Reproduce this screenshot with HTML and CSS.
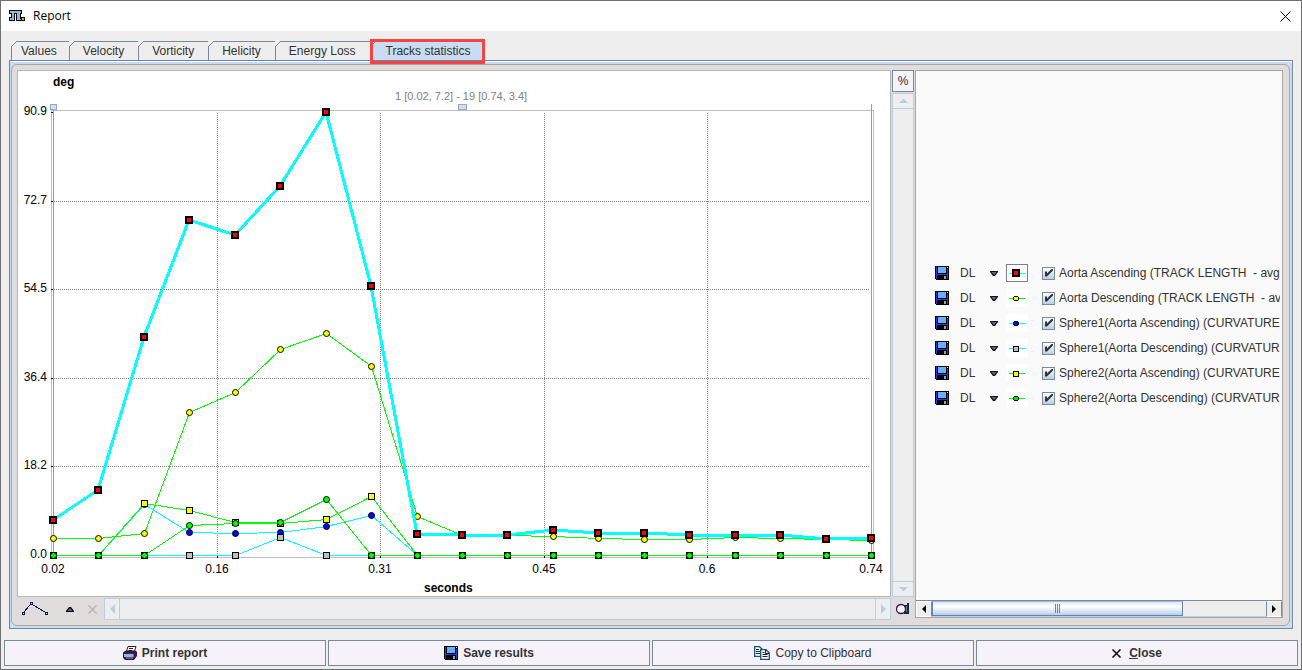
FILE: index.html
```html
<!DOCTYPE html>
<html lang="en">
<head>
<meta charset="utf-8">
<title>Report</title>
<link rel="stylesheet" href="styles.css">
</head>
<body>
<svg class="defs" aria-hidden="true">
  <defs>
    <symbol id="floppy" viewBox="0 0 14 14">
      <path d="M0 0H14V14H1L0 13Z" fill="#000"/>
      <path d="M1 1H2V13H1ZM12 3H13V13H12ZM2 8H12V9H2Z" fill="#2a35e0"/>
      <path d="M3 1H11V7H3Z" fill="#63b1ff"/>
      <path d="M12 1H13V2H12Z" fill="#fff"/>
      <path d="M9 10H11V13H9Z" fill="#a0a0a0"/>
    </symbol>
    <symbol id="down" viewBox="0 0 8 5"><path d="M0 0H8V1L5 5H3L0 1Z" fill="#111"/><path d="M1.500 1H6.500L4 4Z" fill="#66668c"/></symbol>
    <marker id="m-red" markerUnits="userSpaceOnUse" markerWidth="8" markerHeight="8" refX="4" refY="4"><rect width="8" height="8"/><rect x="2" y="2" width="4" height="4" fill="#f00"/></marker>
    <marker id="m-yc" markerUnits="userSpaceOnUse" markerWidth="8" markerHeight="8" refX="4" refY="4"><circle cx="4" cy="4" r="3" fill="#ff0" stroke="#000"/></marker>
    <marker id="m-bc" markerUnits="userSpaceOnUse" markerWidth="8" markerHeight="8" refX="4" refY="4"><circle cx="4" cy="4" r="3" fill="#00f" stroke="#000"/></marker>
    <marker id="m-gs" markerUnits="userSpaceOnUse" markerWidth="8" markerHeight="8" refX="4" refY="4"><rect x="1" y="1" width="6" height="6" fill="#c0c0c0" stroke="#000"/></marker>
    <marker id="m-ys" markerUnits="userSpaceOnUse" markerWidth="8" markerHeight="8" refX="4" refY="4"><rect x="1" y="1" width="6" height="6" fill="#ff0" stroke="#000"/></marker>
    <marker id="m-gc" markerUnits="userSpaceOnUse" markerWidth="8" markerHeight="8" refX="4" refY="4"><rect x="1" y="1" width="6" height="6" fill="none"/><circle cx="4" cy="4" r="3" fill="#0f0" stroke="#000"/></marker>
  </defs>
</svg>
<div class="window">
  <header class="titlebar">
    <svg class="app-icon" width="16" height="12" viewBox="0 0 16 12" shape-rendering="crispEdges" aria-hidden="true">
      <path d="M0 0H13V4H12V8H13V11H7V4H6V11H0V7H2V4H0Z" fill="#000"/>
      <path d="M1 1H12V3H11V9H12V10H8V3H5V10H1V8H3V3H1Z" fill="#86bbe0"/>
      <path d="M12 7H16V11H12Z" fill="#000"/><path d="M13 8H15V10H13Z" fill="#f79a1e"/>
    </svg>
    <h1 class="title">Report</h1>
    <button class="win-close" aria-label="Close window"><svg width="11" height="11" viewBox="0 0 11 11"><path d="M.5 .5L10.5 10.5M10.5 .5L.5 10.5" stroke="#000"/></svg></button>
  </header>
  <nav class="tabs">
    <button class="tab">Values</button>
    <button class="tab">Velocity</button>
    <button class="tab">Vorticity</button>
    <button class="tab">Helicity</button>
    <button class="tab">Energy Loss</button>
    <button class="tab selected">Tracks statistics</button>
  </nav>
  <main class="frame">
    <div class="inner">
      <section class="left">
        <div class="chart">
          <svg class="plot" viewBox="18 71 872 525" role="img" aria-label="Tracks statistics chart">
            <g class="crisp">
              <path class="grid" d="M217.5 113V556M380.5 113V556M544.5 113V556M707.5 113V556M54 201.5H870M54 289.5H870M54 378.5H870M54 466.5H870"/>
              <path class="box" d="M51.5 110V557.5H873.5V110.5H51"/>
              <path class="cursor" d="M53.5 110V557M871.5 104V557"/>
              <path class="tick" d="M51 112.5H53M51 201.5H53M51 289.5H53M51 378.5H53M51 466.5H53M217.5 556V558M380.5 556V558M544.5 556V558M707.5 556V558"/>
              <rect class="handle" x="50.5" y="104.5" width="6" height="5"/>
              <rect class="handle" x="458.5" y="104.5" width="8" height="5"/>
            </g>
            <text class="strong" x="53" y="86">deg</text>
            <text class="strong" x="424" y="592">seconds</text>
            <text class="range" x="395" y="100">1 [0.02, 7.2] - 19 [0.74, 3.4]</text>
            <g class="end">
              <text x="47" y="115">90.9</text><text x="47" y="204">72.7</text><text x="47" y="292">54.5</text>
              <text x="47" y="381">36.4</text><text x="47" y="469">18.2</text><text x="47" y="558">0.0</text>
            </g>
            <g class="mid">
              <text x="53" y="573">0.02</text><text x="217" y="573">0.16</text><text x="380" y="573">0.31</text>
              <text x="544" y="573">0.45</text><text x="707" y="573">0.6</text><text x="871" y="573">0.74</text>
            </g>
            <polyline class="s green yc" points="53.5,538.5 98.5,538.5 144.5,533.5 189.5,412.5 235.5,392.5 280.5,349.5 326.5,333.5 371.5,366.5 417.5,516.5 462.5,535.5 507.5,535.5 553.5,536.5 598.5,538.5 644.5,539.5 689.5,539.5 735.5,537.5 780.5,538.5 826.5,539.5 871.5,540.5"/>
            <polyline class="s cyan bc" points="53.5,555.5 98.5,555.5 144.5,504.5 189.5,532.5 235.5,533.5 280.5,532.5 326.5,526.5 371.5,515.5 417.5,555.5 462.5,555.5 507.5,555.5 553.5,555.5 598.5,555.5 644.5,555.5 689.5,555.5 735.5,555.5 780.5,555.5 826.5,555.5 871.5,555.5"/>
            <polyline class="s cyan gs" points="53.5,555.5 98.5,555.5 144.5,555.5 189.5,555.5 235.5,555.5 280.5,537.5 326.5,555.5 371.5,555.5 417.5,555.5 462.5,555.5 507.5,555.5 553.5,555.5 598.5,555.5 644.5,555.5 689.5,555.5 735.5,555.5 780.5,555.5 826.5,555.5 871.5,555.5"/>
            <polyline class="s green ys" points="53.5,555.5 98.5,555.5 144.5,503.5 189.5,510.5 235.5,522.5 280.5,523.5 326.5,519.5 371.5,496.5 417.5,555.5 462.5,555.5 507.5,555.5 553.5,555.5 598.5,555.5 644.5,555.5 689.5,555.5 735.5,555.5 780.5,555.5 826.5,555.5 871.5,555.5"/>
            <polyline class="s green gc" points="53.5,555.5 98.5,555.5 144.5,555.5 189.5,525.5 235.5,523.5 280.5,522.5 326.5,499.5 371.5,555.5 417.5,555.5 462.5,555.5 507.5,555.5 553.5,555.5 598.5,555.5 644.5,555.5 689.5,555.5 735.5,555.5 780.5,555.5 826.5,555.5 871.5,555.5"/>
            <polyline class="s cyan thick red" points="53,520 98,490 144,337 189,220 235,235 280,186 326,112 371,286 417,534 462,535 507,535 553,530 598,533 644,533 689,535 735,535 780,535 826,539 871,538"/>
          </svg>
        </div>
        <div class="toolbar">
          <button class="tool wide" aria-label="Curve mode"><svg width="26" height="14" viewBox="0 0 26 14" fill="none" stroke="#101060" shape-rendering="crispEdges"><path d="M2 10L8 3M11 3L23 10"/><path d="M.5 10.5H2.5V12.5H.5ZM8.5 .5H10.5V2.5H8.5ZM23.5 10.5H25.5V12.5H23.5Z"/></svg></button>
          <button class="tool" aria-label="Move up"><svg width="8" height="5" viewBox="0 0 8 5"><path d="M0 5V4L3 0H5L8 4V5Z"/><path d="M1.500 4L4 1L6.500 4Z" fill="#66668c"/></svg></button>
          <button class="tool" aria-label="Remove"><svg width="9" height="9" viewBox="0 0 9 9"><path d="M.5 .5L8.5 8.5M8.5 .5L.5 8.5" stroke="#b8b8b8" stroke-width="1.5"/></svg></button>
          <div class="scroll horizontal">
            <button aria-label="Scroll left"><svg width="5" height="10" viewBox="0 0 5 10"><path d="M5 0V10L0 5Z" fill="#b8cfe5"/></svg></button>
            <button aria-label="Scroll right"><svg width="5" height="10" viewBox="0 0 5 10"><path d="M0 0V10L5 5Z" fill="#b8cfe5"/></svg></button>
          </div>
        </div>
      </section>
      <section class="middle">
        <button class="percent">%</button>
        <div class="scroll vertical">
          <button aria-label="Scroll up"><svg width="9" height="4" viewBox="0 0 9 4"><path d="M0 4H9L5 0H4Z" fill="#b8cfe5"/></svg></button>
          <button aria-label="Scroll down"><svg width="9" height="4" viewBox="0 0 9 4"><path d="M0 0H9L5 4H4Z" fill="#b8cfe5"/></svg></button>
        </div>
        <button class="tool spot" aria-label="Reset zoom"><svg width="14" height="12" viewBox="0 0 14 12"><path d="M8 2H11V0H13V11H8Z" fill="#202040"/><path d="M10 3H11V9H10Z" fill="#3f8f90"/><circle cx="5" cy="6" r="4.5" fill="#fff" stroke="#3a0d55" stroke-width="1.3"/></svg></button>
      </section>
      <section class="legend">
        <ul class="series">
          <li><button class="tool" aria-label="Save"><svg width="14" height="14" class="crisp"><use href="#floppy"/></svg></button><span class="dl">DL</span><button class="tool drop" aria-label="Options"><svg width="8" height="5"><use href="#down"/></svg></button>
            <svg class="swatch active" viewBox="0 0 22 18"><path class="cyan" d="M3 9.5H19"/><path d="M6 5H14V13H6Z"/><path d="M8 7H12V11H8Z" fill="#f00"/></svg>
            <label><input type="checkbox" checked><span>Aorta Ascending (TRACK LENGTH  - avg)</span></label></li>
          <li><button class="tool" aria-label="Save"><svg width="14" height="14" class="crisp"><use href="#floppy"/></svg></button><span class="dl">DL</span><button class="tool drop" aria-label="Options"><svg width="8" height="5"><use href="#down"/></svg></button>
            <svg class="swatch" viewBox="0 0 22 18"><path class="green" d="M3 9.5H19"/><circle cx="10" cy="9.5" r="2.5" fill="#ff0" stroke="#000"/></svg>
            <label><input type="checkbox" checked><span>Aorta Descending (TRACK LENGTH  - avg)</span></label></li>
          <li><button class="tool" aria-label="Save"><svg width="14" height="14" class="crisp"><use href="#floppy"/></svg></button><span class="dl">DL</span><button class="tool drop" aria-label="Options"><svg width="8" height="5"><use href="#down"/></svg></button>
            <svg class="swatch" viewBox="0 0 22 18"><path class="cyan" d="M3 9.5H19"/><circle cx="10" cy="9.5" r="2.5" fill="#00f" stroke="#000"/></svg>
            <label><input type="checkbox" checked><span>Sphere1(Aorta Ascending) (CURVATURE)</span></label></li>
          <li><button class="tool" aria-label="Save"><svg width="14" height="14" class="crisp"><use href="#floppy"/></svg></button><span class="dl">DL</span><button class="tool drop" aria-label="Options"><svg width="8" height="5"><use href="#down"/></svg></button>
            <svg class="swatch" viewBox="0 0 22 18"><path class="cyan" d="M3 9.5H19"/><path d="M7.500 7.500H12.500V12.500H7.500Z" fill="#c0c0c0" stroke="#000"/></svg>
            <label><input type="checkbox" checked><span>Sphere1(Aorta Descending) (CURVATURE)</span></label></li>
          <li><button class="tool" aria-label="Save"><svg width="14" height="14" class="crisp"><use href="#floppy"/></svg></button><span class="dl">DL</span><button class="tool drop" aria-label="Options"><svg width="8" height="5"><use href="#down"/></svg></button>
            <svg class="swatch" viewBox="0 0 22 18"><path class="green" d="M3 9.5H19"/><path d="M7.500 7.500H12.500V12.500H7.500Z" fill="#ff0" stroke="#000"/></svg>
            <label><input type="checkbox" checked><span>Sphere2(Aorta Ascending) (CURVATURE)</span></label></li>
          <li><button class="tool" aria-label="Save"><svg width="14" height="14" class="crisp"><use href="#floppy"/></svg></button><span class="dl">DL</span><button class="tool drop" aria-label="Options"><svg width="8" height="5"><use href="#down"/></svg></button>
            <svg class="swatch" viewBox="0 0 22 18"><path class="green" d="M3 9.5H19"/><circle cx="10" cy="9.5" r="2.5" fill="#00e000" stroke="#000"/></svg>
            <label><input type="checkbox" checked><span>Sphere2(Aorta Descending) (CURVATURE)</span></label></li>
        </ul>
        <div class="hbar">
          <button aria-label="Scroll left"><svg width="4" height="8" viewBox="0 0 4 8"><path d="M4 0V8L0 4Z"/></svg></button>
          <div class="track"><div class="thumb"><i></i><i></i><i></i></div></div>
          <button aria-label="Scroll right"><svg width="4" height="8" viewBox="0 0 4 8"><path d="M0 0V8L4 4Z"/></svg></button>
        </div>
      </section>
    </div>
  </main>
  <footer class="actions">
    <button class="action"><svg width="14" height="14" viewBox="0 0 14 14" aria-hidden="true"><path d="M5 .5H13L11 6.500H3Z" fill="#fff" stroke="#222"/><path d="M6 2.500H10M5.500 4.500H9" stroke="#222"/><path d="M.6 6.600L3 5H12.500L13.400 6V10L11 13.400H2L.6 12Z" fill="#52114f" stroke="#2a0a2a"/><path d="M1 8H10.500V11H1Z" fill="#6fc6ea"/><path d="M3 12H10" stroke="#a884b0"/></svg>Print report</button>
    <button class="action"><svg width="14" height="14" class="crisp" aria-hidden="true"><use href="#floppy"/></svg>Save results</button>
    <button class="action plain"><svg width="16" height="14" viewBox="0 0 16 14" aria-hidden="true"><path d="M.7 .7H5.500L8 3V10.300H.7Z" fill="#fff" stroke="#10547f" stroke-width="1.3"/><path d="M2 3.500H5M2 5.500H6M2 7.500H6" stroke="#222"/><path d="M6.700 3.700H12L15.300 7V13.300H6.700Z" fill="#fff" stroke="#10547f" stroke-width="1.3"/><path d="M11.500 4V7.500H15M8.500 6.500H10.500M8.500 8.500H13.500M8.500 10.500H13.500" stroke="#222" fill="none"/></svg>Copy to Clipboard</button>
    <button class="action"><svg width="9" height="9" viewBox="0 0 9 9" aria-hidden="true"><path d="M.5 .5L8.500 8.500M8.500 .5L.5 8.500" stroke="#000" stroke-width="1.5"/></svg><span><u>C</u>lose</span></button>
  </footer>
</div>
</body>
</html>
```

FILE: styles.css
```css
* { box-sizing: border-box; }
body { margin: 0; font: 12px/16px "Liberation Sans", Arial, sans-serif; color: #333; }
button { margin: 0; padding: 0; border: 0; background: none; font: inherit; color: inherit; display: flex; flex: none; align-items: center; justify-content: center; }
svg { display: block; flex: none; }
.defs { position: absolute; width: 0; height: 0; }
.crisp { shape-rendering: crispEdges; }

.window { display: flex; flex-direction: column; min-height: 100vh; border: 1px solid #6f6f6f; background: #eee; }
.titlebar { display: flex; align-items: center; height: 30px; padding: 0 10px 0 8px; gap: 8px; background: #fff; }
.title { margin: 0; flex: 1; font: 12px/16px "Open Sans", "Noto Sans", sans-serif; color: #000; }

.tabs { display: flex; height: 29px; padding: 10px 0 0 10px; }
.tab { position: relative; height: 19px; padding: 0 14px 0 13px; border: 1px solid #7a8a99; border-width: 1px 1px 0 0; }
.tab:first-child { border-left-width: 1px; padding: 0 12px 0 9px; }
.tab::before { content: ""; position: absolute; left: -1px; top: -1px; width: 6px; height: 6px; background: linear-gradient(135deg, #eee 42%, #7a8a99 44%, #7a8a99 54%, transparent 56%); }
.tab.selected { padding: 0 14px 0 15px; border-color: #c8ddf2; background: #c8ddf2; }
.tab.selected::after { content: ""; position: absolute; z-index: 1; inset: -3px -1px -4px -1px; border: 3px solid #fa4340; }

.frame { flex: 1; display: flex; margin: 0 8px; padding: 3px 2px 2px 1px; border: 1px solid #7a8a99; border-top-color: #6382bf; border-left-color: #6382bf; background: #c8ddf2; box-shadow: inset 0 1px #fff; }
.inner { flex: 1; min-width: 0; display: grid; grid-template-columns: minmax(0, 874fr) 22px minmax(0, 368fr); gap: 1px; padding: 5px 6px 5px 5px; border: 1px solid #a9a6a5; border-radius: 6px; background: #e0dcdb; }
.left { display: flex; flex-direction: column; gap: 1px; }
.chart { flex: 1; border: 1px solid #b8b5b5; background: #fff; }
.plot { width: 100%; }
.plot text { font-size: 12px; fill: #000; }
.plot .strong { font-weight: bold; }
.plot .range { font-size: 11px; fill: #808080; }
.end { text-anchor: end; }
.mid { text-anchor: middle; }
.plot path { fill: none; }
.grid { stroke: #808080; stroke-dasharray: 1 1; }
.box { stroke: #bfbfbf; }
.cursor { stroke: #9b93cf; }
.tick { stroke: #000; }
.handle { fill: #dcdcdc; stroke: #8fa6dc; }
.s { fill: none; shape-rendering: crispEdges; }
.green { stroke: #0f0; }
.cyan { stroke: #0ff; }
.thick { stroke-width: 3; }
.yc { marker: url(#m-yc); }
.bc { marker: url(#m-bc); }
.gs { marker: url(#m-gs); }
.ys { marker: url(#m-ys); }
.gc { marker: url(#m-gc); }
.red { marker: url(#m-red); }

.toolbar { display: flex; height: 22px; }
.tool { width: 22px; height: 22px; }
.tool.wide { width: 36px; margin-right: 6px; }
.scroll { flex: 1; display: flex; justify-content: space-between; border: 1px solid #b8cfe5; background: #eee; }
.horizontal { margin-left: 1px; }
.horizontal button { width: 15px; border-right: 1px solid #b8cfe5; }
.horizontal button:last-child { border-right: 0; border-left: 1px solid #b8cfe5; }
.middle { display: flex; flex-direction: column; gap: 1px; }
.percent { height: 22px; border: 1px solid #7a8a99; background: #f5f2fa; }
.vertical { flex-direction: column; }
.vertical button { height: 15px; border-bottom: 1px solid #b8cfe5; }
.vertical button:last-child { border-bottom: 0; border-top: 1px solid #b8cfe5; }

.legend { display: flex; flex-direction: column; min-width: 0; margin-bottom: 2px; border: 1px solid #a9a6a5; background: #fafafa; }
.series { flex: 1; min-height: 0; display: flex; flex-direction: column; justify-content: center; margin: 0 2px 0 0; padding: 0 0 0 15px; list-style: none; overflow: hidden; }
.series li { display: flex; align-items: center; height: 25px; }
.series label { display: flex; flex: none; align-items: center; gap: 4px; white-space: pre; margin-left: 14px; }
.dl { flex: none; width: 22px; margin-left: 7px; }
.drop { width: 24px; }
.swatch { width: 22px; height: 18px; background: #fff; shape-rendering: crispEdges; }
.swatch.active { outline: 1px solid #808080; outline-offset: -1px; }
.series input { appearance: none; flex: none; width: 13px; height: 13px; margin: 0; border: 1px solid #7a8a99; background: linear-gradient(#fff, #b8cfe5); position: relative; }
.series input:checked::after { content: ""; position: absolute; left: 2px; top: 1px; width: 8px; height: 8px; background: #333; clip-path: polygon(0 3px, 2px 3px, 2px 5px, 7px 0, 8px 0, 8px 2px, 2px 8px, 0 8px); }

.hbar { display: flex; height: 17px; border-top: 1px solid #7a8a99; background: #eee; }
.hbar button { width: 16px; border: 1px solid #fff; border-right-color: #7a8a99; }
.hbar button:last-child { border-left-color: #7a8a99; }
.track { flex: 1; border-bottom: 1px solid #b8cfe5; }
.thumb { display: flex; align-items: center; justify-content: center; gap: 1px; width: 75%; height: 15px; border: 1px solid #6382bf; border-top-color: #a3b8db; background: linear-gradient(#dce7f3, #fff 35%, #b8cfe5); }
.thumb i { width: 1px; height: 9px; background: #6382bf; }

.actions { display: grid; grid-template-columns: repeat(4, minmax(0, 1fr)); gap: 2px; padding: 11px 3px 3px; }
.action { height: 26px; gap: 5px; border: 1px solid #7a8a99; background: #f5f2fa; font-weight: bold; }
.action.plain { font-weight: normal; }
.action:last-child { gap: 8px; }
```
